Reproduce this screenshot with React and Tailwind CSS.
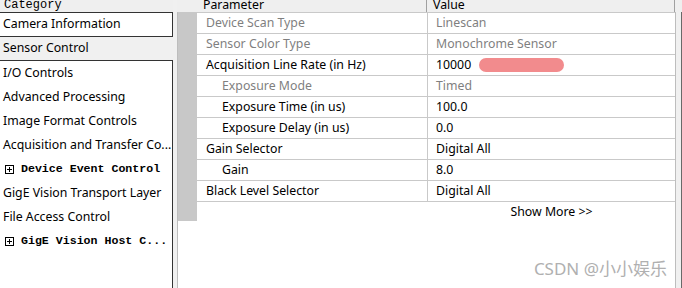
import React from 'react';

const categories = [
  { label: 'I/O Controls' },
  { label: 'Advanced Processing' },
  { label: 'Image Format Controls' },
  { label: 'Acquisition and Transfer Co...' },
  { label: 'Device Event Control', group: true },
  { label: 'GigE Vision Transport Layer' },
  { label: 'File Access Control' },
  { label: 'GigE Vision Host C...', group: true },
];

const params = [
  { name: 'Device Scan Type', value: 'Linescan', muted: true },
  { name: 'Sensor Color Type', value: 'Monochrome Sensor', muted: true },
  { name: 'Acquisition Line Rate (in Hz)', value: '10000', blot: true },
  { name: 'Exposure Mode', value: 'Timed', muted: true, indent: true },
  { name: 'Exposure Time (in us)', value: '100.0', indent: true },
  { name: 'Exposure Delay (in us)', value: '0.0', indent: true },
  { name: 'Gain Selector', value: 'Digital All' },
  { name: 'Gain', value: '8.0', indent: true },
  { name: 'Black Level Selector', value: 'Digital All' },
];

const PlusBox = () => (
  <svg width="9" height="9" viewBox="0 0 9 9" className="shrink-0">
    <rect x="0.5" y="0.5" width="8" height="8" fill="none" stroke="#000" />
    <path d="M2 4.5h5M4.5 2v5" stroke="#000" />
  </svg>
);

const sans = "font-['Noto_Sans',sans-serif] text-[12.3px]";

export default function App() {
  return (
    <div className="relative flex w-[682px] h-[288px] bg-white overflow-hidden">
      {/* Category list */}
      <div className="flex flex-col w-[173px] shrink-0">
        <div className="h-[12px] bg-[#efefef] overflow-hidden pl-[4px] font-['Liberation_Mono',monospace] text-[12px] leading-[10px] text-black">
          Category
        </div>
        <div className={`h-[25px] flex items-center pl-[3px] border-y border-r border-[#333] bg-white ${sans} text-black`}>
          Camera Information
        </div>
        <div className={`h-[23px] flex items-center pl-[3px] bg-[#f0f0f0] ${sans} text-black`}>
          Sensor Control
        </div>
        <div className="flex-1 flex flex-col border-t border-r border-[#333]">
          {categories.map((c) =>
            c.group ? (
              <div key={c.label} className="h-[24px] flex items-center gap-[7px] pl-[5px] font-['Liberation_Mono',monospace] text-[11.6px] font-bold text-black whitespace-nowrap">
                <PlusBox />
                <span>{c.label}</span>
              </div>
            ) : (
              <div key={c.label} className={`h-[24px] flex items-center pl-[3px] ${sans} text-black whitespace-nowrap`}>
                {c.label}
              </div>
            )
          )}
        </div>
      </div>

      {/* splitter */}
      <div className="w-[4px] shrink-0 bg-[#f0f0f0]" />

      {/* Parameter grid */}
      <div className="flex-1 flex flex-col">
        <div className="h-[12px] flex bg-[#efefef] overflow-hidden font-['Noto_Sans',sans-serif] text-[12.3px] leading-[9px] text-black">
          <div className="w-[250px] pl-[26px] border-r border-[#a0a0a0]">Parameter</div>
          <div className="w-[248px] pl-[6px] border-r border-[#a0a0a0]">Value</div>
        </div>
        <div className="flex-1 flex">
          <div className="w-[499px] flex border-l border-[#a0a0a0] border-r border-[#bdbdbd]">
            <div className="w-[19px] h-[209px] bg-[#c8c8c8]" />
            <div className="flex-1 flex flex-col border-t border-[#c9c9c9] self-start">
              {params.map((p) => (
                <div key={p.name} className={`h-[21px] flex border-b border-[#c9c9c9] ${sans} ${p.muted ? 'text-[#7f7f7f]' : 'text-black'}`}>
                  <div className={`w-[231px] flex items-center border-r border-[#c9c9c9] whitespace-nowrap ${p.indent ? 'pl-[25px]' : 'pl-[9px]'}`}>
                    {p.name}
                  </div>
                  <div className="flex-1 flex items-center pl-[8px] gap-[8px]">
                    <span>{p.value}</span>
                    {p.blot && <span className="w-[85px] h-[14px] rounded-full bg-[#f28b8d]" />}
                  </div>
                </div>
              ))}
              <div className={`h-[20px] flex items-center ${sans} text-black`}>
                <div className="w-[231px]" />
                <div className="flex-1 text-center">Show More &gt;&gt;</div>
              </div>
            </div>
          </div>
          <div className="w-[5px] bg-[#f0f0f0]" />
          <div className="w-[1px] bg-[#696969]" />
        </div>
      </div>

      <div className="absolute right-[15px] bottom-[7px] font-['Noto_Sans','Noto_Sans_CJK_SC',sans-serif] text-[17px] text-[#b0b0b0]">
        CSDN @小小娱乐
      </div>
    </div>
  );
}
